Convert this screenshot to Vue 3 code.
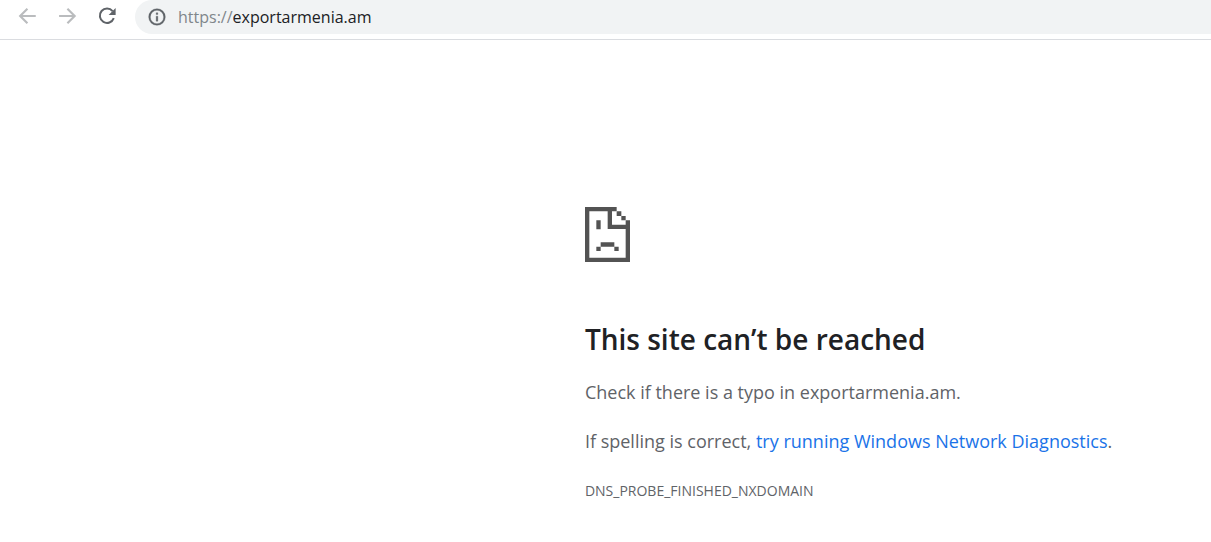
<script setup>
import { ref } from 'vue'

const address = ref('exportarmenia.am')
const host = 'exportarmenia.am'
</script>

<template>
  <div class="browser">
    <header class="toolbar">
      <nav class="nav" aria-label="Navigation">
        <button type="button" class="nav-btn" aria-label="Back" disabled>
          <svg viewBox="0 0 24 24"><path d="M22.5 12H4.5M12.5 3.2L3.8 12l8.7 8.8" /></svg>
        </button>
        <button type="button" class="nav-btn" aria-label="Forward" disabled>
          <svg viewBox="0 0 24 24"><path d="M2.5 12h18M12.5 3.2l8.7 8.8-8.7 8.8" /></svg>
        </button>
        <button type="button" class="nav-btn" aria-label="Reload">
          <svg viewBox="0 0 20 20">
            <path class="arc" d="M16.8 12.2a7.2 7.2 0 1 1-1.2-7.1" />
            <path class="head" d="M18.6 2v7h-7z" />
          </svg>
        </button>
      </nav>
      <form class="omnibox" @submit.prevent>
        <button type="button" class="info" aria-label="View site information">
          <svg viewBox="0 0 24 24">
            <path d="M11 17h2v-6h-2v6zm1-15a10 10 0 1 0 0 20 10 10 0 0 0 0-20zm0 18a8 8 0 1 1 0-16 8 8 0 0 1 0 16zM11 9h2V7h-2v2z" />
          </svg>
        </button>
        <label class="scheme" for="address">https://</label>
        <input id="address" v-model="address" class="address" type="text" spellcheck="false" autocomplete="off" />
      </form>
    </header>

    <main class="error">
      <svg class="sad-page" viewBox="0 0 135 165" aria-hidden="true">
        <path d="M0 0H95V13H81V53H122V40H135V165H0zM13 13V152H122V66H68V13z" fill-rule="evenodd" />
        <path d="M95 13h14v14h-14zM109 27h13v13h-13zM34 40h13v27H34zM47 106h41v13H47zM34 119h13v13H34zM88 119h13v13H88z" />
      </svg>
      <h1>This site can’t be reached</h1>
      <p>Check if there is a typo in {{ host }}.</p>
      <p>If spelling is correct, <a href="#diagnostics">try running Windows Network Diagnostics</a>.</p>
      <div class="code">DNS_PROBE_FINISHED_NXDOMAIN</div>
    </main>
  </div>
</template>

<style>
body {
  background: #fff;
}
</style>

<style scoped>
.browser {
  font-family: "Segoe UI", "Open Sans", "Noto Sans", sans-serif;
  color: #5f6368;
}

.toolbar {
  display: flex;
  align-items: flex-start;
  height: 39px;
  border-bottom: 1px solid #dadce0;
  overflow: hidden;
}

.nav {
  display: flex;
  gap: 20px;
  padding: 6px 18px 0 17px;
}

button {
  border: 0;
  padding: 0;
  background: none;
}

.nav-btn,
.nav-btn svg {
  display: block;
  width: 20px;
  height: 20px;
}

.nav-btn svg {
  fill: none;
  stroke: #babcbe;
  stroke-width: 2.6;
}

.nav-btn .arc {
  stroke: #5f6368;
  stroke-width: 2;
}

.nav-btn .head {
  fill: #5f6368;
  stroke: none;
}

.omnibox {
  flex: 1;
  display: flex;
  align-items: center;
  height: 34px;
  padding-left: 12px;
  background: #f1f3f4;
  border-radius: 17px 0 0 17px;
  font-size: 16px;
  line-height: 22px;
}

.info {
  margin-right: 11px;
}

.info svg {
  display: block;
  width: 20px;
  height: 20px;
  fill: #5f6368;
  stroke: #5f6368;
  stroke-width: 0.4;
}

.scheme {
  color: #80868b;
}

.address {
  flex: 1;
  min-width: 0;
  padding: 0;
  border: 0;
  outline: 0;
  background: none;
  color: #202124;
  font: inherit;
}

.error {
  margin-left: 48.3%;
  padding-top: 167px;
}

.sad-page {
  display: block;
  width: 45px;
  height: 55px;
  fill: #535353;
}

h1 {
  margin: 57px 0 0;
  color: #202124;
  font-size: 28px;
  font-weight: 600;
  line-height: 40px;
}

p {
  margin: 19px 0 0;
  font-size: 18px;
  line-height: 30px;
}

h1 + p {
  margin-top: 18px;
}

a {
  color: #1a73e8;
  text-decoration: none;
}

.code {
  margin-top: 23px;
  font-size: 14px;
  line-height: 24px;
}
</style>
